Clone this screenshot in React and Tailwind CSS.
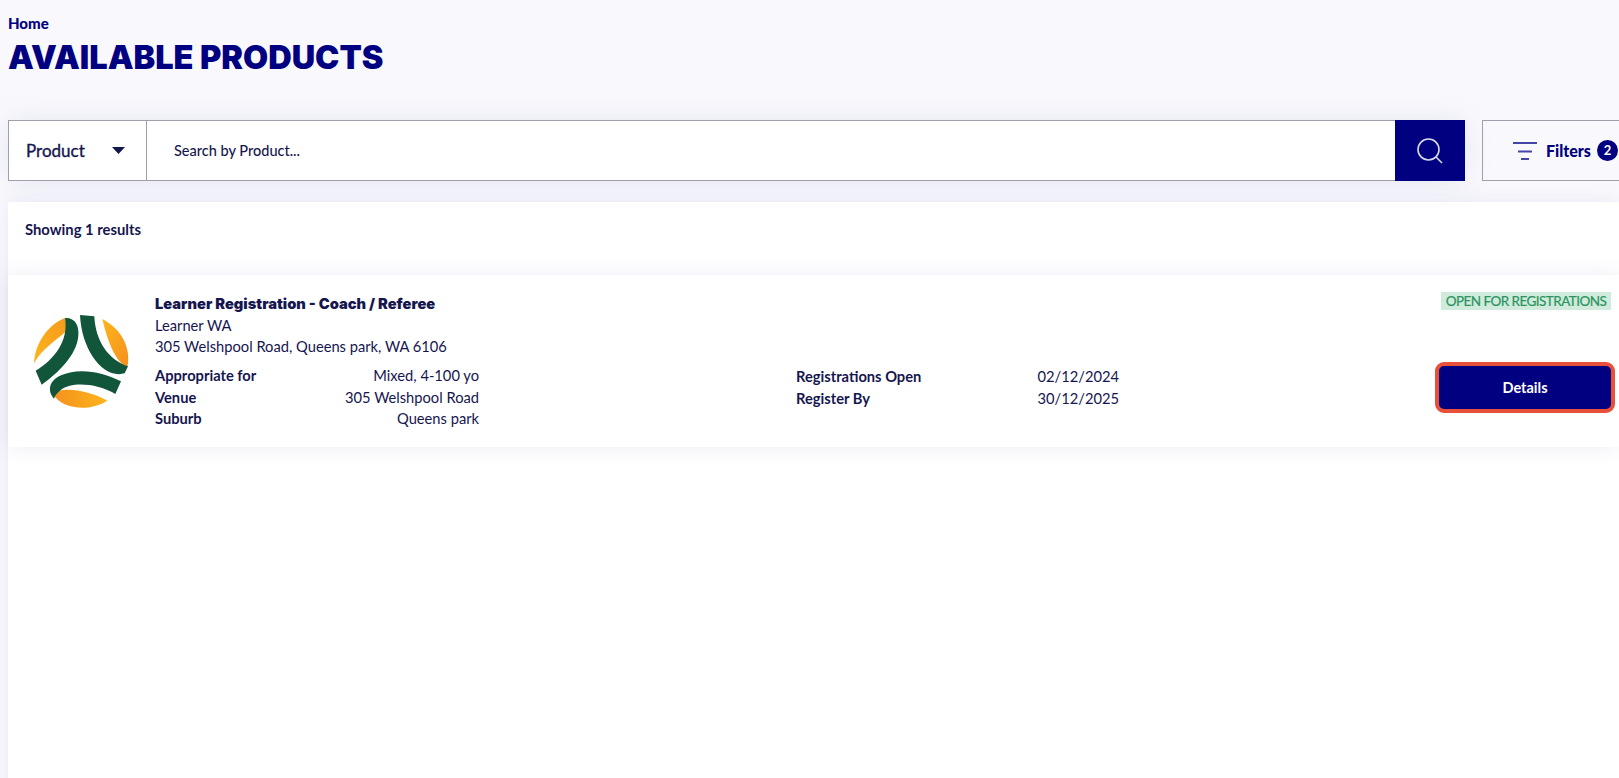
import React from "react";

const Logo = () => (
  <svg width="120" height="110" viewBox="0 0 360 330" className="shrink-0">
    <defs>
      <linearGradient id="orangeA" x1="1" y1="0" x2="0" y2="1">
        <stop offset="0" stopColor="#f59a1e" />
        <stop offset="1" stopColor="#fdb51c" />
      </linearGradient>
      <linearGradient id="orangeB" x1="0" y1="0" x2="1" y2="1">
        <stop offset="0" stopColor="#fdb51c" />
        <stop offset="1" stopColor="#f4901e" />
      </linearGradient>
      <linearGradient id="orangeC" x1="0" y1="0" x2="1" y2="0">
        <stop offset="0" stopColor="#f4901e" />
        <stop offset="1" stopColor="#fdb51c" />
      </linearGradient>
    </defs>
    <path d="M42 178C46 112 88 60 135 42L142 78C112 108 68 130 42 178Z" fill="url(#orangeA)" />
    <path d="M247 45C304 75 334 130 322 190C286 175 262 110 247 45Z" fill="url(#orangeB)" />
    <path d="M98 270C125 246 205 258 262 290C205 326 125 314 98 270Z" fill="url(#orangeC)" />
    <path d="M135 42C165 40 178 65 175 95C170 155 112 208 65 242L47 200C105 165 146 110 135 42Z" fill="#11553b" />
    <path d="M180 33L223 37C226 110 265 168 324 187L314 208C250 226 185 140 180 33Z" fill="#11553b" />
    <path d="M303 232L286 270C235 238 155 232 125 256C112 266 104 276 102 284C84 262 84 235 118 216C170 190 245 201 303 232Z" fill="#11553b" />
  </svg>
);

const Row = ({ label, value, width }) => (
  <div className={`flex justify-between h-[21.8px] items-center ${width}`}>
    <span className="font-bold">{label}</span>
    <span>{value}</span>
  </div>
);

export default function App() {
  return (
    <div className="h-[778px] w-[1619px] overflow-hidden bg-[#f9f9fd] text-[#16164f] text-[14.7px] font-['Lato',sans-serif]">
      <div className="pl-2 pt-[14px]">
        <div className="text-[15px] leading-[18px] font-black text-[#000080]">Home</div>
        <h1 className="mt-[6px] text-[32.500px] leading-[40px] font-black font-['Inter',sans-serif] text-[#000080] whitespace-nowrap">
          AVAILABLE PRODUCTS
        </h1>

        <div className="mt-[42px] flex h-[61px]">
          <div className="flex w-[1457px] shrink-0 border border-[#a0a0ac] bg-white shadow-[0_0_30px_rgba(80,80,160,0.12)]">
            <div className="flex w-[138px] items-center justify-between border-r border-[#a0a0ac] pl-[17px] pr-[21px] text-[17px] [-webkit-text-stroke:0.35px]">
              Product
              <svg width="13" height="7" viewBox="0 0 13 7">
                <path d="M0 0H13L6.500 7Z" fill="#16164f" />
              </svg>
            </div>
            <div className="flex flex-1 items-center pl-[27px] text-[14.500px] font-medium">Search by Product...</div>
            <div className="flex w-[70px] items-center justify-center bg-[#000080] -my-px -mr-px">
              <svg width="28" height="28" viewBox="0 0 28 28" fill="none" stroke="#d8d8ea" strokeWidth="1.6">
                <circle cx="12.500" cy="12.500" r="10.500" />
                <path d="M20 20L26 26" />
              </svg>
            </div>
          </div>
          <div className="ml-[17px] flex w-[160px] shrink-0 items-center border border-[#a0a0ac] pl-[30px]">
            <svg width="24" height="20" viewBox="0 0 24 20" fill="none" stroke="#4545a8" strokeWidth="2" className="shrink-0">
              <path d="M0 2H24M5 10.500H19M8 18H16" />
            </svg>
            <span className="ml-[9px] text-[16px] font-black text-[#000080]">Filters</span>
            <span className="ml-[6px] flex h-[21px] w-[21px] shrink-0 items-center justify-center rounded-full bg-[#000080] text-[13px] font-bold text-white">
              2
            </span>
          </div>
        </div>

        <div className="mt-[21px] h-[600px] bg-white shadow-[0_0_20px_rgba(80,80,160,0.1)]">
          <div className="flex h-[73px] items-start pl-[17px] pt-[16px] text-[14.800px] font-bold">Showing 1 results</div>
          <div className="flex h-[172px] bg-white shadow-[0_0_20px_rgba(80,80,160,0.1)]">
            <div className="pl-[12px] pt-[29px]">
              <Logo />
            </div>
            <div className="ml-[15px] pt-[19px]">
              <div className="h-[20px] text-[14.700px] leading-[20px] font-black font-['Inter',sans-serif] whitespace-nowrap">
                Learner Registration - Coach / Referee
              </div>
              <div className="leading-[22px]">Learner WA</div>
              <div className="leading-[21px]">305 Welshpool Road, Queens park, WA 6106</div>
              <div className="mt-[7px]">
                <Row label="Appropriate for" value="Mixed, 4-100 yo" width="w-[324px]" />
                <Row label="Venue" value="305 Welshpool Road" width="w-[324px]" />
                <Row label="Suburb" value="Queens park" width="w-[324px]" />
              </div>
            </div>
            <div className="ml-[317px] pt-[90px]">
              <Row label="Registrations Open" value="02/12/2024" width="w-[323px]" />
              <Row label="Register By" value="30/12/2025" width="w-[323px]" />
            </div>
            <div className="ml-auto flex w-[184px] flex-col items-end pr-[4px] pt-[17px]">
              <div className="mr-[4px] flex h-[18px] w-[170px] items-center justify-center bg-[#d0eadb] text-[13.500px] tracking-[-0.55px] [-webkit-text-stroke:0.2px] whitespace-nowrap text-[#2a9460]">
                OPEN FOR REGISTRATIONS
              </div>
              <button className="mt-[52px] h-[51px] w-[180px] shrink-0 rounded-[9px] border-[4px] border-[#e8503a] bg-[#000080] text-[14.500px] font-bold text-white">
                Details
              </button>
            </div>
          </div>
        </div>
      </div>
    </div>
  );
}
